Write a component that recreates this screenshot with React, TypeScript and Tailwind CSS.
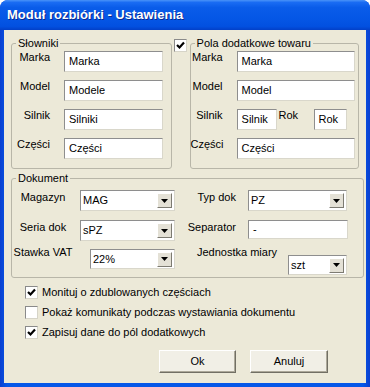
import { ReactNode } from 'react';

const Field = ({ text, w, h = 'h-[21px]' }: { text: string; w: string; h?: string }) => (
  <div
    className={`${w} ${h} bg-white border border-t-[#8e8e8e] border-l-[#8e8e8e] border-b-[#d9d7cb] border-r-[#d9d7cb] pl-[4px] flex items-center leading-none whitespace-nowrap overflow-hidden`}
  >
    {text}
  </div>
);

const Select = ({ text, w, h = 'h-[21px]', extra = '' }: { text: string; w: string; h?: string; extra?: string }) => (
  <div
    className={`${w} ${h} ${extra} bg-white border border-t-[#8e8e8e] border-l-[#8e8e8e] border-b-[#d9d7cb] border-r-[#d9d7cb] pl-[2px] pr-[2px] flex items-center`}
  >
    <span className="flex-1 leading-none">{text}</span>
    <div className="w-[15px] h-[15px] bg-[#e4e1d6] border border-t-white border-l-white border-b-[#7d7b72] border-r-[#7d7b72] flex items-center justify-center">
      <svg width="7" height="4" viewBox="0 0 7 4">
        <polygon points="0,0 7,0 3.5,4" fill="#000" />
      </svg>
    </div>
  </div>
);

const Check = ({ checked }: { checked: boolean }) => (
  <div className="w-[13px] h-[13px] shrink-0 bg-white border border-t-[#8a8a8a] border-l-[#8a8a8a] border-b-[#d6d4c8] border-r-[#d6d4c8] flex items-center justify-center">
    {checked && (
      <svg width="9" height="9" viewBox="0 0 9 9">
        <polyline points="1,4 3.5,6.5 8,1.5" fill="none" stroke="#000" strokeWidth="2.2" />
      </svg>
    )}
  </div>
);

const Group = ({ title, className, children }: { title: string; className: string; children: ReactNode }) => (
  <fieldset className={`border border-[#b8b6a8] rounded-[3px] p-0 m-0 min-w-0 ${className}`}>
    <legend className="ml-[4px] px-[2px] leading-[14px]">{title}</legend>
    {children}
  </fieldset>
);

const Row = ({ label, labelW, children }: { label: string; labelW: string; children: ReactNode }) => (
  <div className="flex items-start h-[21px]">
    <div className={`${labelW} text-right leading-[13px]`}>{label}</div>
    <div className="ml-[14px] flex items-start">{children}</div>
  </div>
);

const App = () => {
  return (
    <div className="w-[370px] h-[387px] bg-white text-[11px] text-black font-['Liberation_Sans',Arial,sans-serif]">
      <div className="h-full rounded-t-[8px] overflow-hidden flex flex-col bg-[linear-gradient(90deg,#0a3fd0_0%,#0557e8_2%,#0557e8_98%,#0a3fd0_100%)]">
        <div className="h-[30px] shrink-0 px-[7px] flex items-center text-white font-bold text-[13px] [text-shadow:1px_1px_0_#0b2a8f] bg-[linear-gradient(180deg,#4a93f8_0%,#1a6cf3_8%,#0a5ce9_25%,#0557e6_60%,#0250e0_88%,#0240c8_100%)]">
          Moduł rozbiórki - Ustawienia
        </div>
        <div className="mx-[4px] mb-[4px] flex-1 bg-[#ECE9D8] px-[7px] pt-[6px] flex flex-col">
          <div className="flex items-start">
            <Group title="Słowniki" className="w-[163px] h-[133px]">
              <div className="pt-[1px] flex flex-col gap-[8px]">
                <Row label="Marka" labelW="w-[38px]">
                  <Field text="Marka" w="w-[99px]" />
                </Row>
                <Row label="Model" labelW="w-[38px]">
                  <Field text="Modele" w="w-[99px]" />
                </Row>
                <Row label="Silnik" labelW="w-[38px]">
                  <Field text="Silniki" w="w-[99px]" />
                </Row>
                <Row label="Części" labelW="w-[38px]">
                  <Field text="Części" w="w-[99px]" />
                </Row>
              </div>
            </Group>
            <div className="ml-[2px] mt-[3px]">
              <Check checked />
            </div>
            <Group title="Pola dodatkowe towaru" className="ml-[3px] w-[172px] h-[133px]">
              <div className="pt-[1px] flex flex-col gap-[8px]">
                <Row label="Marka" labelW="w-[32px]">
                  <Field text="Marka" w="w-[118px]" />
                </Row>
                <Row label="Model" labelW="w-[32px]">
                  <Field text="Model" w="w-[118px]" />
                </Row>
                <Row label="Silnik" labelW="w-[32px]">
                  <Field text="Silnik" w="w-[40px]" />
                  <div className="ml-[2px] w-[35px] leading-[13px]">Rok</div>
                  <Field text="Rok" w="w-[33px]" />
                </Row>
                <Row label="Części" labelW="w-[32px]">
                  <Field text="Części" w="w-[118px]" />
                </Row>
              </div>
            </Group>
          </div>

          <Group title="Dokument" className="mt-[2px] w-[353px] h-[107px]">
            <div className="pt-[5px] flex flex-col">
              <div className="flex items-start h-[21px]">
                <div className="w-[62px] text-center leading-[13px] mt-[1px]">Magazyn</div>
                <Select text="MAG" w="w-[95px]" extra="ml-[6px]" />
                <div className="w-[61px] text-right leading-[13px] mt-[1px]">Typ dok</div>
                <Select text="PZ" w="w-[99px]" extra="ml-[12px]" />
              </div>
              <div className="flex items-start h-[21px] mt-[9px]">
                <div className="w-[62px] text-center leading-[13px] mt-[1px]">Seria dok</div>
                <Select text="sPZ" w="w-[95px]" extra="ml-[6px]" />
                <div className="w-[61px] text-right leading-[13px] mt-[1px]">Separator</div>
                <div className="ml-[12px]">
                  <Field text="-" w="w-[100px]" h="h-[19px]" />
                </div>
              </div>
              <div className="flex items-start h-[29px] mt-[5px]">
                <div className="w-[62px] text-center leading-[13px]">Stawka VAT</div>
                <Select text="22%" w="w-[85px]" h="h-[20px]" extra="ml-[16px] mt-[3px]" />
                <div className="ml-[22px] w-[91px] leading-[13px]">Jednostka miary</div>
                <Select text="szt" w="w-[59px]" h="h-[20px]" extra="mt-[9px]" />
              </div>
            </div>
          </Group>

          <div className="mt-[4px] flex flex-col">
            {[
              { label: 'Monituj o zdublowanych częściach', checked: true },
              { label: 'Pokaż komunikaty podczas wystawiania dokumentu', checked: false },
              { label: 'Zapisuj dane do pól dodatkowych', checked: true },
            ].map((c) => (
              <div key={c.label} className="h-[20px] flex items-center ml-[14px]">
                <Check checked={c.checked} />
                <span className="ml-[4px] leading-none">{c.label}</span>
              </div>
            ))}
          </div>

          <div className="mt-[8px] flex">
            <button className="ml-[148px] w-[77px] h-[23px] bg-[#f1efe6] border border-t-white border-l-white border-b-[#716f64] border-r-[#716f64] shadow-[inset_-1px_-1px_0_#aca899] leading-none">
              Ok
            </button>
            <button className="ml-[14px] w-[78px] h-[23px] bg-[#f1efe6] border border-t-white border-l-white border-b-[#716f64] border-r-[#716f64] shadow-[inset_-1px_-1px_0_#aca899] leading-none">
              Anuluj
            </button>
          </div>
        </div>
      </div>
    </div>
  );
};

export default App;
